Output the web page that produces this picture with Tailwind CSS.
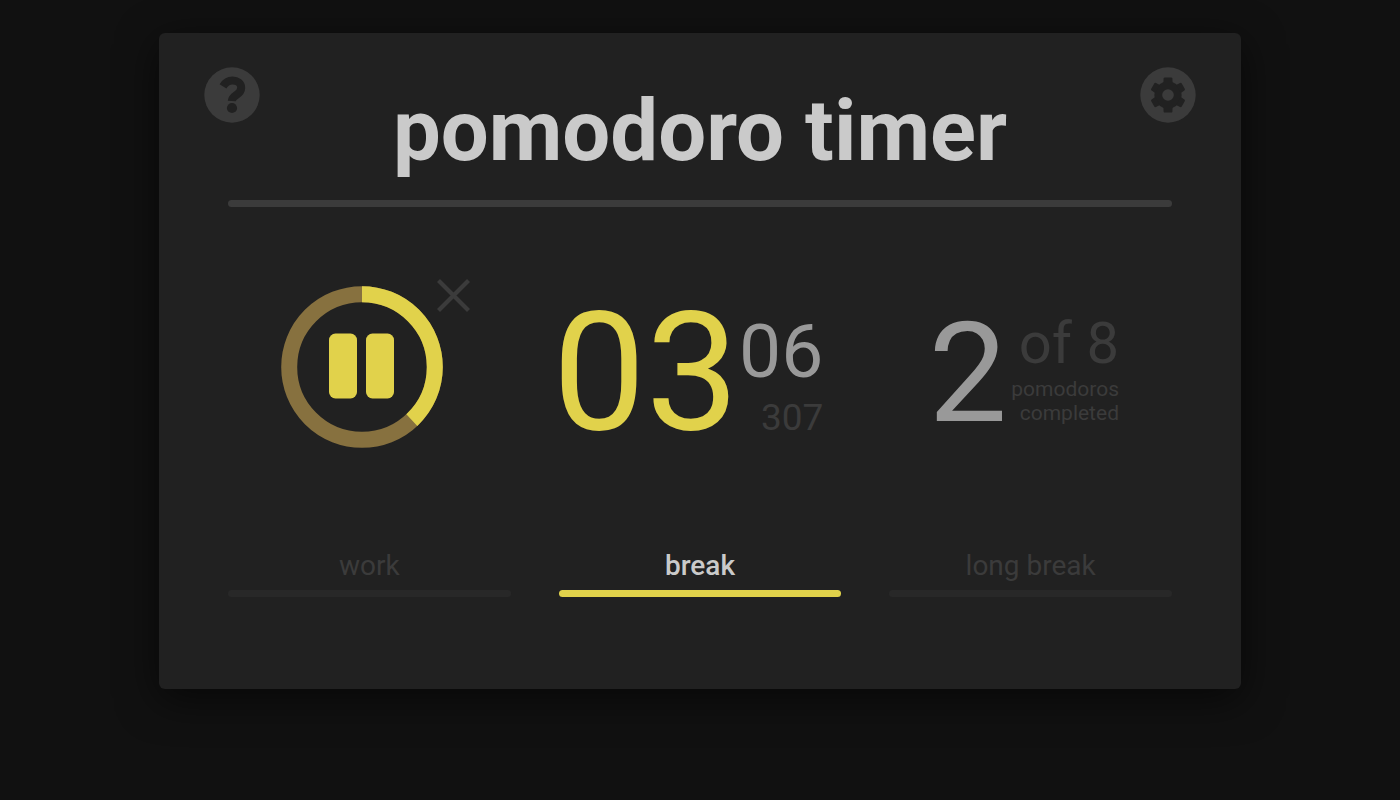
<!DOCTYPE html>
<html lang="en">
<head>
<meta charset="utf-8">
<meta name="viewport" content="width=device-width, initial-scale=1">
<title>pomodoro timer</title>
<script src="https://cdn.jsdelivr.net/npm/@tailwindcss/browser@4"></script>
</head>
<body class="min-h-screen bg-[#111111] font-['Roboto',sans-serif] text-[#3b3b3b]">
<main class="mx-auto max-w-[1082px] pt-[33px]">
  <section class="rounded-md bg-[#212121] pb-[92px] shadow-[0_10px_40px_rgba(0,0,0,0.6)]">
    <header class="flex items-start justify-between px-[45px] pt-[34px]">
      <button type="button" aria-label="Help" class="size-14 shrink-0">
        <svg viewBox="0 0 56 56" class="size-full" fill="none">
          <circle cx="28" cy="28" r="27.7" fill="#3b3b3b"/>
          <path d="M19 19.4C21.2 15.8 24.2 13.6 28.4 13.6C33.4 13.6 37.2 16 37.2 20.7C37.2 24.6 34.8 26.4 32.2 28.1C29.6 29.8 28 31 27.8 34" stroke="#212121" stroke-width="8"/>
          <circle cx="28" cy="41" r="5.1" fill="#212121"/>
        </svg>
      </button>
      <h1 class="pt-3.5 text-center text-[85px] leading-[100px] font-bold text-[#cacaca]">pomodoro timer</h1>
      <button type="button" aria-label="Settings" class="size-14 shrink-0">
        <svg viewBox="0 0 56 56" class="size-full">
          <circle cx="28" cy="28" r="27.7" fill="#3b3b3b"/>
          <g fill="#212121">
            <circle cx="28" cy="28" r="13.6"/>
            <path id="tooth" d="M23.4 16 L23.6 11.6 Q23.7 10.4 25 10.4 H31 Q32.3 10.4 32.4 11.6 L32.6 16 Z"/>
            <use href="#tooth" transform="rotate(60 28 28)"/>
            <use href="#tooth" transform="rotate(120 28 28)"/>
            <use href="#tooth" transform="rotate(180 28 28)"/>
            <use href="#tooth" transform="rotate(240 28 28)"/>
            <use href="#tooth" transform="rotate(300 28 28)"/>
          </g>
          <circle cx="28" cy="28" r="5.8" fill="#3b3b3b"/>
        </svg>
      </button>
    </header>
    <hr class="mx-[69px] mt-[19px] h-[7px] rounded-sm border-0 bg-[#3b3b3b]">

    <div class="grid grid-cols-3 gap-12 px-[69px] pt-[79px]">
      <div class="flex items-start pl-[53px]">
        <div class="relative">
          <button type="button" aria-label="Pause" class="block size-[162px]">
            <svg viewBox="0 0 162 162" class="size-full" fill="none">
              <circle cx="81" cy="81" r="72.8" stroke="#87713f" stroke-width="16"/>
              <circle cx="81" cy="81" r="72.8" stroke="#e1d24b" stroke-width="16" pathLength="100" stroke-dasharray="38 62" transform="rotate(-90 81 81)"/>
              <rect x="48" y="47.5" width="28" height="65" rx="6.5" fill="#e1d24b"/>
              <rect x="85" y="47.5" width="28" height="65" rx="6.5" fill="#e1d24b"/>
            </svg>
          </button>
          <button type="button" aria-label="Cancel" class="absolute -top-2 left-[155px] size-[35px]">
            <svg viewBox="0 0 35 35" class="size-full"><path d="M2.5 2.5 32.5 32.5M32.5 2.5 2.5 32.5" stroke="#3b3b3b" stroke-width="4.2"/></svg>
          </button>
        </div>
      </div>

      <div class="flex items-start justify-end pr-[18px]">
        <div class="pt-1 text-[166px] leading-none text-[#e1d24b]">03</div>
        <div class="pt-7 text-right">
          <div class="text-[75px] leading-none text-[#999999]">06</div>
          <div class="mt-2.5 text-[37px] leading-none">307</div>
        </div>
      </div>

      <div class="flex items-start justify-end gap-1 pr-[53px]">
        <div class="pt-[17px] text-[140px] leading-none text-[#999999]">2</div>
        <div class="pt-[27px] text-right">
          <div class="text-[58px] leading-[60px]">of 8</div>
          <div class="mt-1 text-[21px] leading-6">pomodoros<br>completed</div>
        </div>
      </div>
    </div>

    <nav class="mt-[94px] grid grid-cols-3 gap-12 px-[69px] text-[28px] leading-8">
      <button type="button">work<span class="mt-2 block h-[7px] rounded-sm bg-[#282828]"></span></button>
      <button type="button" aria-current="true" class="font-medium text-[#cacaca]">break<span class="mt-2 block h-[7px] rounded-sm bg-[#e1d24b]"></span></button>
      <button type="button">long break<span class="mt-2 block h-[7px] rounded-sm bg-[#282828]"></span></button>
    </nav>
  </section>
</main>
</body>
</html>
